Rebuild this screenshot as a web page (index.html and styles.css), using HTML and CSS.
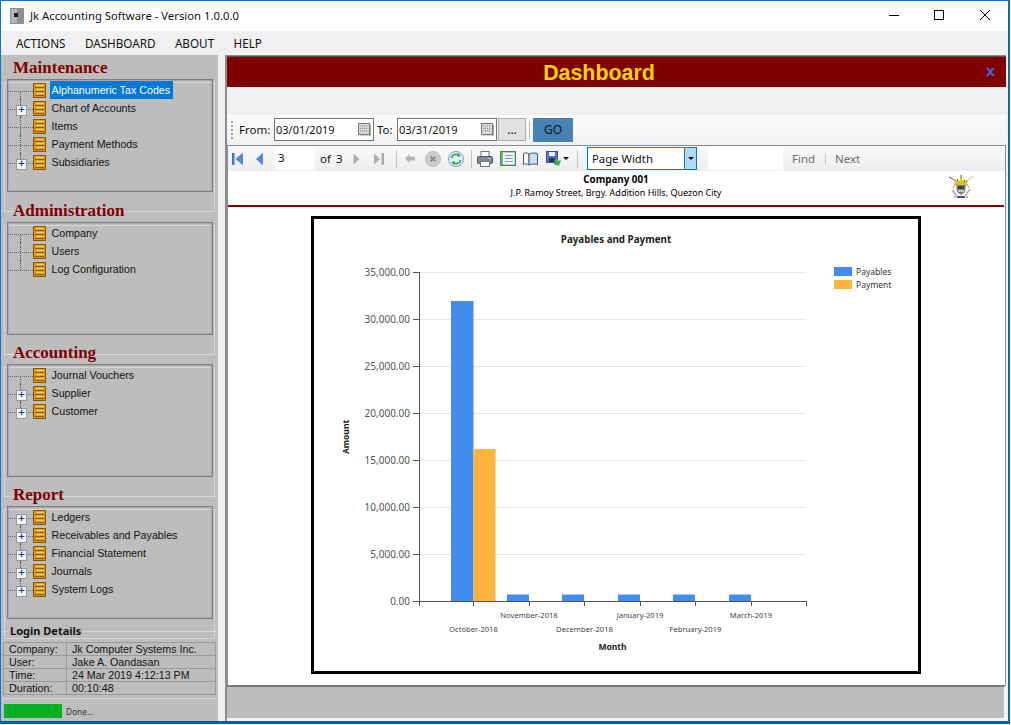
FILE: index.html
```html
<!DOCTYPE html>
<html lang="en">
<head>
<meta charset="utf-8">
<title>Jk Accounting Software</title>
<link rel="stylesheet" href="styles.css">
</head>
<body>
<svg class="defs" width="0" height="0" aria-hidden="true">
  <symbol id="cab" viewBox="0 0 13 15">
    <rect x="0.5" y="0.5" width="12" height="14" fill="#d9930f" stroke="#8a5606"/>
    <path d="M3 2.500h8M3 6.500h8M3 10.500h8" stroke="#f7cf5e" stroke-width="1.300"/>
    <path d="M2 4.500h9M2 8.500h9M2 12.500h9" stroke="#8a5a08"/>
  </symbol>
</svg>
<div class="window">
  <header class="titlebar">
    <svg class="appicon" width="14" height="16" viewBox="0 0 14 16"><rect width="14" height="16" fill="#8b9094"/><rect x="1" y="1" width="6" height="14" fill="#b4b8bb"/><rect x="4" y="5" width="4" height="4" fill="#1c1e20"/></svg>
    <span class="title">Jk Accounting Software - Version 1.0.0.0</span>
    <div class="controls">
      <svg width="46" height="30" viewBox="0 0 46 30"><path d="M19 14.500h10" stroke="#000"/></svg>
      <svg width="46" height="30" viewBox="0 0 46 30"><rect x="18.500" y="9.500" width="9" height="9" fill="none" stroke="#000"/></svg>
      <svg width="46" height="30" viewBox="0 0 46 30"><path d="M18 9l10 10M28 9l-10 10" stroke="#000"/></svg>
    </div>
  </header>
  <nav class="menubar">
    <span>ACTIONS</span><span>DASHBOARD</span><span>ABOUT</span><span>HELP</span>
  </nav>
  <div class="main">
    <aside class="sidebar">
      <fieldset class="group">
        <legend>Maintenance</legend>
        <ul class="tree">
          <li class="sel"><i class="twig"></i><svg class="cab"><use href="#cab"/></svg><span>Alphanumeric Tax Codes</span></li>
          <li><i class="twig plus"></i><svg class="cab"><use href="#cab"/></svg><span>Chart of Accounts</span></li>
          <li><i class="twig"></i><svg class="cab"><use href="#cab"/></svg><span>Items</span></li>
          <li><i class="twig"></i><svg class="cab"><use href="#cab"/></svg><span>Payment Methods</span></li>
          <li><i class="twig plus"></i><svg class="cab"><use href="#cab"/></svg><span>Subsidiaries</span></li>
        </ul>
      </fieldset>
      <fieldset class="group">
        <legend>Administration</legend>
        <ul class="tree">
          <li><i class="twig"></i><svg class="cab"><use href="#cab"/></svg><span>Company</span></li>
          <li><i class="twig"></i><svg class="cab"><use href="#cab"/></svg><span>Users</span></li>
          <li><i class="twig"></i><svg class="cab"><use href="#cab"/></svg><span>Log Configuration</span></li>
        </ul>
      </fieldset>
      <fieldset class="group">
        <legend>Accounting</legend>
        <ul class="tree">
          <li><i class="twig"></i><svg class="cab"><use href="#cab"/></svg><span>Journal Vouchers</span></li>
          <li><i class="twig plus"></i><svg class="cab"><use href="#cab"/></svg><span>Supplier</span></li>
          <li><i class="twig plus"></i><svg class="cab"><use href="#cab"/></svg><span>Customer</span></li>
        </ul>
      </fieldset>
      <fieldset class="group">
        <legend>Report</legend>
        <ul class="tree">
          <li><i class="twig plus"></i><svg class="cab"><use href="#cab"/></svg><span>Ledgers</span></li>
          <li><i class="twig plus"></i><svg class="cab"><use href="#cab"/></svg><span>Receivables and Payables</span></li>
          <li><i class="twig plus"></i><svg class="cab"><use href="#cab"/></svg><span>Financial Statement</span></li>
          <li><i class="twig plus"></i><svg class="cab"><use href="#cab"/></svg><span>Journals</span></li>
          <li><i class="twig plus"></i><svg class="cab"><use href="#cab"/></svg><span>System Logs</span></li>
        </ul>
      </fieldset>
      <fieldset class="login">
        <legend>Login Details</legend>
        <table>
          <tr><td>Company:</td><td>Jk Computer Systems Inc.</td></tr>
          <tr><td>User:</td><td>Jake A. Oandasan</td></tr>
          <tr><td>Time:</td><td>24 Mar 2019 4:12:13 PM</td></tr>
          <tr><td>Duration:</td><td>00:10:48</td></tr>
        </table>
      </fieldset>
      <div class="status"><span class="progress"></span><span>Done...</span></div>
    </aside>
    <section class="content">
      <div class="banner"><h1>Dashboard</h1><span class="close">x</span></div>
      <div class="band"></div>
      <div class="filters">
        <i class="grip"></i>
        <label class="from">From:</label>
        <div class="date"><span>03/01/2019</span><svg class="cal" width="13" height="13" viewBox="0 0 13 13"><rect x="0.500" y="0.500" width="11" height="11" fill="#d8d8d8" stroke="#777"/><path d="M2 3h8M2 5.500h8M2 8h8" stroke="#888" stroke-dasharray="1 1"/><path d="M12.500 2v11h-11" fill="none" stroke="#aaa"/></svg></div>
        <label class="to">To:</label>
        <div class="date"><span>03/31/2019</span><svg class="cal" width="13" height="13" viewBox="0 0 13 13"><rect x="0.500" y="0.500" width="11" height="11" fill="#d8d8d8" stroke="#777"/><path d="M2 3h8M2 5.500h8M2 8h8" stroke="#888" stroke-dasharray="1 1"/><path d="M12.500 2v11h-11" fill="none" stroke="#aaa"/></svg></div>
        <button class="more" type="button">...</button>
        <i class="sep"></i>
        <button class="go" type="button">GO</button>
      </div>
      <div class="viewer">
        <div class="rtools">
          <svg class="ic" width="11" height="12" viewBox="0 0 11 12"><path d="M0 0h2.500v12H0z" fill="#3b78d8"/><path d="M10.500 .5v11L4 6z" fill="#4a8be8" stroke="#2f66c0" stroke-width=".6"/></svg>
          <svg class="ic prev" width="7" height="12" viewBox="0 0 7 12"><path d="M6.500 .5v11L.5 6z" fill="#4a8be8" stroke="#2f66c0" stroke-width=".6"/></svg>
          <div class="page">3</div>
          <span class="of">of</span><span class="total">3</span>
          <svg class="ic next" width="7" height="12" viewBox="0 0 7 12"><path d="M.5 .5v11l6-5.500z" fill="#adadad"/></svg>
          <svg class="ic last" width="10" height="12" viewBox="0 0 10 12"><path d="M0 .5v11l6-5.500z" fill="#adadad"/><path d="M7.500 0H10v12H7.500z" fill="#adadad"/></svg>
          <i class="sep s1"></i>
          <svg class="ic back" width="10" height="9" viewBox="0 0 10 9"><path d="M4.500 0v2.500H10v4H4.500V9L0 4.500z" fill="#b4b4b4"/></svg>
          <svg class="ic stop" width="16" height="16" viewBox="0 0 16 16"><circle cx="8" cy="8" r="7.500" fill="#cdcdcd" stroke="#bcbcbc"/><path d="M5.500 5.500l5 5M10.500 5.500l-5 5" stroke="#8f8f8f" stroke-width="1.800"/></svg>
          <svg class="ic refresh" width="16" height="16" viewBox="0 0 16 16"><circle cx="8" cy="8" r="7.500" fill="#e3effb" stroke="#6d9ed6"/><path d="M3.500 7A4.500 4.500 0 0 1 11 4.500" fill="none" stroke="#3da23d" stroke-width="1.600"/><path d="M10 2l3 3-4 1z" fill="#3da23d"/><path d="M12.500 9A4.500 4.500 0 0 1 5 11.500" fill="none" stroke="#3da23d" stroke-width="1.600"/><path d="M6 14l-3-3 4-1z" fill="#3da23d"/></svg>
          <i class="sep s2"></i>
          <svg class="ic print" width="16" height="16" viewBox="0 0 16 16"><rect x="4" y="0.500" width="8" height="6" fill="#fff" stroke="#6a7580"/><rect x="0.500" y="5.500" width="15" height="7" rx="1" fill="#7f8c99" stroke="#4d5862"/><rect x="3.500" y="10.500" width="9" height="5" fill="#fff" stroke="#6a7580"/><path d="M11 7.500h3" stroke="#6fc8ff"/></svg>
          <svg class="ic layout" width="16" height="15" viewBox="0 0 16 15"><rect x="0.500" y="0.500" width="15" height="14" fill="#7bb07b" stroke="#4a854a"/><rect x="3" y="1.500" width="11.500" height="12" fill="#f6f9fd"/><path d="M5 4.500h8M5 7.500h8M5 10.500h8" stroke="#7f97b0"/></svg>
          <svg class="ic setup" width="15" height="14" viewBox="0 0 15 14"><path d="M.5 1.500C2.500 .5 4.500 .8 6 2v11c-1.500-1.200-3.500-1.500-5.500-.5z" fill="#fff" stroke="#4a5560"/><path d="M6 2c2-1.200 5-1.200 8.500-.5v11c-3.500-.7-6.500-.7-8.500 .5z" fill="#c9dcf2" stroke="#4a5560"/></svg>
          <svg class="ic save" width="15" height="16" viewBox="0 0 15 16"><rect x="0.500" y="0.500" width="11" height="11" fill="#5a6fc0" stroke="#3d4e96"/><rect x="3" y="1" width="6" height="4" fill="#e8ecf8"/><rect x="3" y="7" width="6" height="4" fill="#27315f"/><path d="M11 7l1.500 3 2.500-1-2 6-6-2 2.500-1.500L8 9z" fill="#35b04a"/></svg>
          <i class="caret"></i>
          <i class="sep s3"></i>
          <div class="combo"><span>Page Width</span><b><i class="caret dark"></i></b></div>
          <div class="findbox"></div>
          <span class="find">Find</span>
          <i class="sep s4"></i>
          <span class="find next-link">Next</span>
        </div>
        <div class="report">
          <div class="rhead">
            <strong>Company 001</strong>
            <p>J.P. Ramoy Street, Brgy. Addition Hills, Quezon City</p>
            <svg class="crest" width="26" height="24" viewBox="0 0 26 24"><path d="M1 2l7 4" stroke="#8a3a70"/><path d="M25 1l-6 5" stroke="#f0a090"/><path d="M12 0h2v4h-2z" fill="#d4b020"/><path d="M6 5l4 1 3-2 3 2 4-1-1 5H7z" fill="#d8c030"/><path d="M9 4h1v2H9zM16 5h1v2h-1z" fill="#6d5c14"/><path d="M8 10h10l-1 7-4 3-4-3z" fill="#80807a"/><path d="M10 11h6v3h-6z" fill="#3f3f4a"/><path d="M10 15h6v2h-6z" fill="#c8c8c0"/><path d="M4 15l5 6M22 14l-5 7" stroke="#b4b4dc" stroke-width="2"/><path d="M7 9l-2 4M19 9l2 4" stroke="#c8a830"/><path d="M9 21h8v2H9z" fill="#3c4cc0"/><path d="M6 21h2v2H6z" fill="#d9c020"/><path d="M18 21h2v2h-2z" fill="#d9c020"/></svg>
          </div>
          <div class="frame">
            <svg class="chart" width="604" height="452" viewBox="314 219 604 452">
              <text class="ctitle" x="616" y="243">Payables and Payment</text>
              <g class="grid">
                <path d="M419 272.500H806M419 319.500H806M419 366.500H806M419 413.500H806M419 460.500H806M419 507.500H806M419 554.500H806"/>
              </g>
              <g class="ylab">
                <text x="410" y="276">35,000.00</text>
                <text x="410" y="323">30,000.00</text>
                <text x="410" y="370">25,000.00</text>
                <text x="410" y="417">20,000.00</text>
                <text x="410" y="464">15,000.00</text>
                <text x="410" y="511">10,000.00</text>
                <text x="410" y="558">5,000.00</text>
                <text x="410" y="605">0.00</text>
              </g>
              <g fill="#438cef">
                <rect x="451" y="301" width="22.500" height="300"/>
                <rect x="507" y="594.500" width="22" height="6.500"/>
                <rect x="562" y="594.500" width="22" height="6.500"/>
                <rect x="618" y="594.500" width="22" height="6.500"/>
                <rect x="673" y="594.500" width="22" height="6.500"/>
                <rect x="729" y="594.500" width="22" height="6.500"/>
              </g>
              <rect x="473.500" y="449" width="22" height="152" fill="#fdb441"/>
              <path class="axis" d="M419.500 272V606M413 272.500h6M413 319.500h6M413 366.500h6M413 413.500h6M413 460.500h6M413 507.500h6M413 554.500h6M413 601.500H806M473.500 601v5M529.500 601v5M584.500 601v5M640.500 601v5M695.500 601v5M751.500 601v5M806.500 601v5"/>
              <g class="xlab">
                <text x="473.500" y="632">October-2018</text>
                <text x="529" y="618">November-2018</text>
                <text x="584.500" y="632">December-2018</text>
                <text x="640" y="618">January-2019</text>
                <text x="695.500" y="632">February-2019</text>
                <text x="751" y="618">March-2019</text>
              </g>
              <text class="atitle" x="612.500" y="650">Month</text>
              <text class="atitle" transform="translate(349 437) rotate(-90)">Amount</text>
              <rect x="834" y="267" width="18" height="9" fill="#438cef"/>
              <rect x="834" y="280" width="18" height="9" fill="#fdb441"/>
              <text class="leg" x="856" y="275">Payables</text>
              <text class="leg" x="856" y="288">Payment</text>
            </svg>
          </div>
        </div>
      </div>
      <div class="foot"></div>
    </section>
  </div>
</div>
</body>
</html>
```
FILE: styles.css
```css
* { box-sizing: border-box; }
html, body { margin: 0; padding: 0; background: #fff; }
body { width: 1011px; height: 725px; overflow: hidden; font-family: "Noto Sans", "Open Sans", sans-serif; font-size: 11.3px; color: #111; }
.defs { position: absolute; }
.window { width: 1010px; height: 724px; border: 1px solid #0b74d1; border-right: 2px solid #1268bb; border-bottom: 3px solid #0d5ca8; display: flex; flex-direction: column; background: #f0f0f0; }

.titlebar { height: 30px; flex: none; background: #fff; display: flex; align-items: center; padding-left: 9px; }
.appicon { flex: none; margin-top: -1px; }
.title { margin-left: 6px; font-size: 11.3px; margin-top: -1px; }
.controls { margin-left: auto; display: flex; }
.controls svg { display: block; }

.menubar { height: 24px; flex: none; display: flex; align-items: center; padding-left: 15px; gap: 19.400px; background: #f0f0f0; font-size: 11.7px; }

.main { flex: 1; min-height: 0; display: flex; }
.sidebar { width: 217px; flex: none; background: #bdbdbd; padding: 5px 3px 0 3px; display: flex; flex-direction: column; }

.group { margin: 0; padding: 0 2px 0 3px; height: 142px; border: 0; position: relative; min-width: 0; flex: none; }
.group:first-child { height: 143px; }
.group::before { content: ""; position: absolute; left: 0; right: 0; top: 7px; height: 128px; border: 1px solid #d6d6d6; }
.group legend { font: bold 17px/15px "Liberation Serif", serif; color: #800000; padding: 0 2px; margin-left: 4px; position: relative; height: 15px; }
.tree { list-style: none; margin: 4px 0 0 0; padding: 1px 0 0 0; height: 113px; border: 1px solid #7f7f7f; box-shadow: inset 0 0 0 1px #ababab; position: relative; font-family: "Liberation Sans", sans-serif; font-size: 10.700px; }
.tree li { height: 18px; display: flex; align-items: center; position: relative; }
.tree span { padding: 0 3px 0 1.500px; height: 18px; line-height: 18px; margin-left: 4px; white-space: nowrap; }
.tree .sel span { background: #0078d7; color: #fff; }
.cab { width: 13px; height: 15px; flex: none; margin-top: 1px; }
.twig { width: 25px; height: 18px; flex: none; position: relative; background: linear-gradient(90deg, #666 50%, transparent 50%) 12px 10px / 2px 1px repeat-x; }
.tree li::before { content: ""; position: absolute; left: 12px; top: 0; height: 18px; border-left: 1px dotted #555; }
.tree li:first-child::before { top: 10px; height: 8px; }
.tree li:last-child::before { height: 10px; }
.twig.plus::after { content: "+"; position: absolute; left: 8px; top: 6px; width: 9px; height: 9px; background: #f4f4f4; border: 1px solid #8a98a8; font: bold 9px/7px "DejaVu Sans", sans-serif; text-align: center; color: #23368a; }

.login { margin: -5px -2px 0; padding: 0; border: 0; border-top: 1px solid #d6d6d6; min-width: 0; flex: none; }
.login legend { font: bold 11px/14px "Noto Sans", sans-serif; padding: 0 2px; margin-left: 6px; }
.login table { border-collapse: collapse; width: 213px; margin: 4px 0 0 1px; table-layout: fixed; border: 1px solid #9a9a9a; font-family: "Liberation Sans", sans-serif; }
.login td { border: 1px solid #9a9a9a; padding: 0 0 0 5px; height: 13px; line-height: 12px; font-size: 10.700px; white-space: nowrap; overflow: hidden; }
.login td:first-child { width: 63px; }
.status { height: 24px; display: flex; align-items: flex-start; gap: 4px; font-size: 8.3px; line-height: 15px; margin: 3px -2px 0; border-top: 1px solid #d6d6d6; padding: 5px 0 0 2px; color: #333; flex: none; }
.progress { width: 58px; height: 14px; background: #06b025; flex: none; }

.content { width: 781px; flex: none; margin-left: 7px; display: flex; flex-direction: column; border-top: 1px solid #8c8c8c; border-left: 2px solid #8c8c8c; }
.banner { height: 31px; background: #800000; border-top: 1px solid #555; display: flex; align-items: center; justify-content: center; padding: 2px 35px 0 0; position: relative; flex: none; }
.banner h1 { margin: 0; font: bold 21.400px/28px "Liberation Sans", sans-serif; color: #ffd500; }
.close { position: absolute; right: 11px; top: 6px; font: bold 14px/16px "DejaVu Sans", sans-serif; color: #4a58e8; }
.band { height: 28px; background: #f0f0f0; flex: none; }

.filters { height: 30px; flex: none; background: linear-gradient(#fbfbfb, #f1f1f1); display: flex; align-items: center; padding: 0 0 1px 4px; font-size: 11.5px; }
.grip { width: 2px; height: 18px; background: repeating-linear-gradient(#a0a0a0 0 2px, transparent 2px 4px); margin-right: 6px; flex: none; }
.from { width: 35px; flex: none; }
.to { width: 20px; margin-left: 3px; flex: none; }
.date { width: 100px; height: 23px; background: #fff; border: 1px solid #707070; display: flex; align-items: center; padding: 0 2px 0 1px; justify-content: space-between; font-size: 11px; flex: none; }
.more { width: 28px; height: 23px; margin-left: 1px; background: #e1e1e1; border: 1px solid #adadad; font: 12px/16px "Noto Sans", sans-serif; padding: 0; flex: none; }
.sep { display: block; width: 1px; height: 18px; background: #c0c0c0; flex: none; }
.filters .sep { margin: 0 2px 0 3px; }
.go { width: 40px; height: 24px; margin-left: 1px; background: #4682b4; border: 0; font: 12px/16px "Noto Sans", sans-serif; color: #111; padding: 0; flex: none; }

.viewer { flex: 1; min-height: 0; display: flex; flex-direction: column; border: 1px solid #8c8c8c; border-bottom: 0; }
.rtools { height: 25px; flex: none; background: linear-gradient(#fafafa, #ededed); display: flex; align-items: center; font-size: 11.5px; padding-left: 4px; }
.ic { flex: none; display: block; }
.prev { margin-left: 13px; }
.page { width: 40px; height: 23px; margin-left: 12px; background: #fff; padding-left: 3px; line-height: 22px; flex: none; }
.of { margin-left: 5px; width: 16px; flex: none; }
.total { width: 7px; flex: none; }
.next { margin-left: 10px; }
.last { margin-left: 14px; }
.s1 { margin-left: 12px; }
.back { margin-left: 8px; }
.stop { margin-left: 10px; }
.refresh { margin-left: 7px; }
.s2 { margin-left: 7px; }
.print { margin-left: 5px; }
.layout { margin-left: 7px; }
.setup { margin-left: 7px; }
.save { margin-left: 8px; }
.caret { display: block; width: 6px; height: 3px; border-left: 3px solid transparent; border-right: 3px solid transparent; border-top: 3px solid #111; margin-left: 2px; flex: none; }
.s3 { margin-left: 8px; }
.combo { width: 110px; height: 23px; margin-left: 9px; background: #fff; border: 1px solid #0078d7; display: flex; padding-left: 4px; flex: none; line-height: 21px; font-size: 11.3px; }
.combo span { flex: 1; }
.combo b { width: 12px; background: #b5d6f1; border-left: 1px solid #0078d7; display: flex; align-items: center; justify-content: center; }
.combo .caret { margin: 0; }
.findbox { width: 75px; height: 23px; margin-left: 11px; background: #fff; flex: none; }
.find { color: #6d6d6d; margin-left: 9px; width: 23px; flex: none; }
.s4 { height: 10px; margin-left: 10px; }
.next-link { width: 26px; }

.report { flex: 1; min-height: 0; background: #fff; display: flex; flex-direction: column; }
.rhead { height: 36px; flex: none; position: relative; border-bottom: 2px solid #7d0000; margin-right: 1px; text-align: center; color: #000; padding-top: 3px; }
.rhead strong { display: block; font-size: 9.800px; line-height: 12px; }
.rhead p { margin: 1px 0 0; font-size: 9px; line-height: 12px; }
.crest { position: absolute; right: 30px; top: 4px; }
.frame { width: 610px; height: 458px; margin: 9px 0 0 83px; border: 3px solid #000; flex: none; }
.chart { display: block; font-family: "Noto Sans", sans-serif; }
.chart text { fill: #333; }
.ctitle { font-size: 9.800px; font-weight: 700; text-anchor: middle; }
.chart .ctitle, .chart .atitle { fill: #222; }
.atitle { font-size: 8.500px; font-weight: 700; text-anchor: middle; }
.grid path { stroke: #e6e6e6; fill: none; }
.ylab text { font-size: 10px; text-anchor: end; }
.chart .ylab text { fill: #555; }
.xlab text { font-size: 7.600px; text-anchor: middle; }
.chart .xlab text { fill: #444; }
.leg { font-size: 8.500px; }
.axis { stroke: #555; fill: none; }

.foot { height: 36px; flex: none; background: #bdbdbd; border-top: 2px solid #7a7a7a; border-bottom: 3px solid #f4f4f4; border-right: 2px solid #f4f4f4; }
```
